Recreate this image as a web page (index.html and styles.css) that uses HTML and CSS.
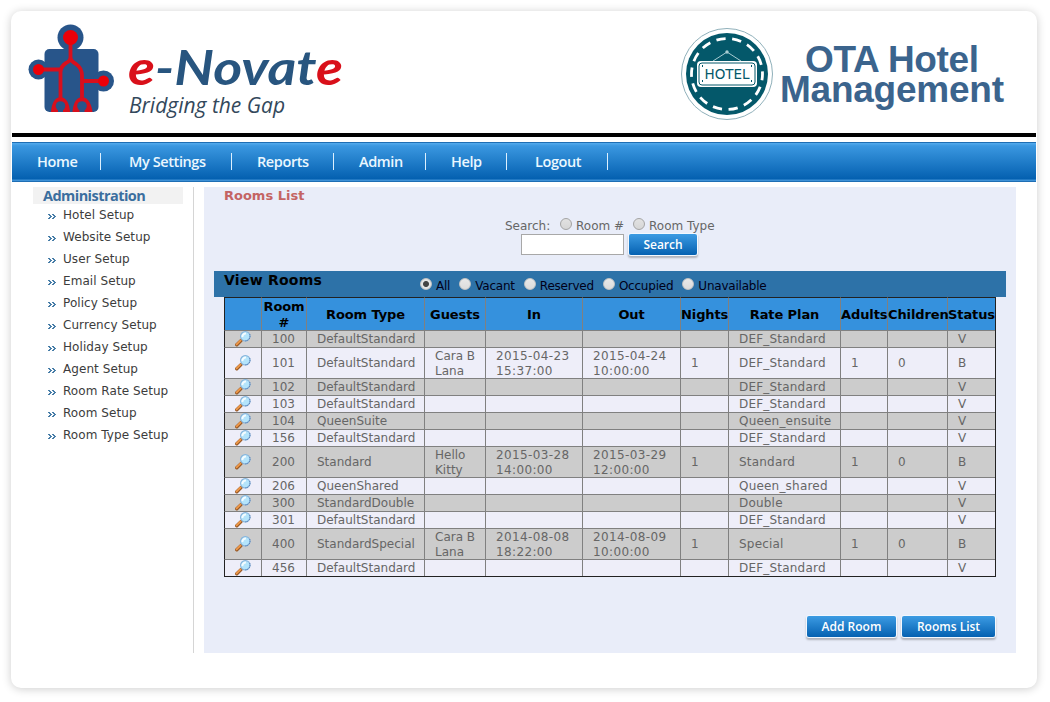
FILE: index.html
```html
<!DOCTYPE html>
<html lang="en">
<head>
<meta charset="utf-8">
<title>Rooms List</title>
<link rel="stylesheet" href="styles.css">
</head>
<body>
<svg class="defs" width="0" height="0" aria-hidden="true">
  <symbol id="lens" viewBox="0 0 16 16">
    <path d="M1.8 13.8 6 9.600" stroke="#9a5a26" stroke-width="3.400" stroke-linecap="round"/>
    <path d="M1.600 13.300 5.600 9.400" stroke="#f09a4a" stroke-width="1.800" stroke-linecap="round"/>
    <circle cx="10.300" cy="5.300" r="4.700" fill="#b4e4fb" stroke="#86b4dc" stroke-width="1.200"/>
    <path d="M7.400 6.200a3.200 3.200 0 0 1 3.600-3.600" stroke="#f4fcff" stroke-width="2" fill="none"/>
    <path d="M14.800 3.300a5 5 0 0 1-5 6.600" stroke="#315c9c" stroke-width=".9" fill="none" stroke-dasharray="1 1"/>
  </symbol>
  <symbol id="chev" viewBox="0 0 8 6">
    <path d="M0 0h1v1h-1zM1 0h1v1h-1zM4 0h2v1h-2zM2 1h1v1h-1zM1 1h1v1h-1zM5 1h2v1h-2zM2 2h2v1h-2zM6 2h2v1h-2zM1 3h2v1h-2zM5 3h2v1h-2zM0 4h2v1h-2zM4 4h2v1h-2z" fill="#2b6a9b" opacity=".88"/>
  </symbol>
</svg>
<div class="page">
  <header class="header">
    <svg class="brand" width="330" height="110" viewBox="20 16 330 110">
      <g fill="#28558a">
        <rect x="44.500" y="49" width="54" height="63" rx="5"/>
        <circle cx="70.500" cy="37.500" r="13"/>
        <circle cx="38.500" cy="69.500" r="10"/>
        <circle cx="103.500" cy="81" r="10.500"/>
      </g>
      <g fill="none" stroke="#d80f1c" stroke-width="3.800">
        <path d="M70.500 37V59M38 69.500H60M60.500 98V72Q61 66 66 63Q70.500 61 70.500 57Q70.500 61 76 64Q82 68 82 76V98M82 81H103"/>
      </g>
      <path d="M51 112Q52 98 60.500 97Q69 98 70 112ZM72.500 112Q73.500 98 82 97Q90.500 98 92.500 112Z" fill="#d80f1c"/>
      <circle cx="60.500" cy="106" r="4.800" fill="#28558a"/>
      <circle cx="82" cy="106" r="4.800" fill="#28558a"/>
      <path d="M58 108h5v4h-5zM79.500 108h5v4h-5z" fill="#28558a"/>
      <circle cx="70.500" cy="37.500" r="7.500" fill="#ec0008"/>
      <circle cx="38.500" cy="69.500" r="5.500" fill="#ec0008"/>
      <circle cx="103.500" cy="81" r="5.500" fill="#ec0008"/>
      <text class="brand-name" x="128" y="85" textLength="215" lengthAdjust="spacingAndGlyphs"><tspan class="red">e</tspan>-Novat<tspan class="red">e</tspan></text>
      <text class="brand-tag" x="129" y="113" textLength="156" lengthAdjust="spacingAndGlyphs">Bridging the Gap</text>
    </svg>
    <svg class="product" width="340" height="110" viewBox="676 18 340 110">
      <circle cx="727" cy="74" r="45.500" fill="#fff" stroke="#8fb0ba"/>
      <circle cx="727" cy="74" r="41" fill="#04586a"/>
      <circle cx="727" cy="74" r="35.500" fill="none" stroke="#fff" stroke-width="2.800" stroke-dasharray="9.300 6.630" stroke-dashoffset="3"/>
      <path d="M713 61 727 52 741 61" stroke="#a9ccd2" fill="none"/>
      <circle cx="727" cy="52" r="1.700" fill="#a9ccd2"/>
      <rect x="697" y="61" width="60" height="26" rx="4" fill="#fff"/>
      <rect x="699" y="63" width="56" height="22" rx="3" fill="#fff" stroke="#04586a"/>
      <path d="M702 66h1M751 66h1M702 81h1M751 81h1" stroke="#04586a" stroke-width="2"/>
      <text class="sign" x="704.500" y="79" textLength="45" lengthAdjust="spacing">HOTEL</text>
      <text class="product-name" x="805" y="72" textLength="174">OTA Hotel</text>
      <text class="product-name" x="780" y="102" textLength="224">Management</text>
    </svg>
  </header>
  <nav>
    <ul class="nav">
      <li>Home</li><li class="wide">My Settings</li><li>Reports</li><li>Admin</li><li>Help</li><li class="wide">Logout</li>
    </ul>
  </nav>
  <div class="body">
    <aside class="side">
      <h2>Administration</h2>
      <ul id="menu"></ul>
    </aside>
    <main class="main">
      <h1>Rooms List</h1>
      <div class="search-opts"><span>Search:</span><input type="radio" name="by"><label>Room #</label><input type="radio" name="by"><label>Room Type</label></div>
      <div class="search-row"><input type="text" class="field"><button class="btn">Search</button></div>
      <div class="bar">
        <h3>View Rooms</h3>
        <div class="filters">
          <input type="radio" name="f" checked><label>All</label>
          <input type="radio" name="f"><label>Vacant</label>
          <input type="radio" name="f"><label>Reserved</label>
          <input type="radio" name="f"><label>Occupied</label>
          <input type="radio" name="f"><label>Unavailable</label>
        </div>
      </div>
      <table class="rooms">
        <colgroup><col class="c1"><col class="c2"><col class="c3"><col class="c4"><col class="c5"><col class="c6"><col class="c7"><col class="c8"><col class="c9"><col class="c10"><col class="c11"></colgroup>
        <thead><tr><th></th><th>Room<br>#</th><th>Room Type</th><th>Guests</th><th>In</th><th>Out</th><th>Nights</th><th>Rate Plan</th><th>Adults</th><th>Children</th><th>Status</th></tr></thead>
        <tbody id="rows"></tbody>
      </table>
      <div class="actions"><button class="btn add">Add Room</button><button class="btn list">Rooms List</button></div>
    </main>
  </div>
</div>
<script src="app.js"></script>
</body>
</html>
```
FILE: styles.css
```css
body { margin: 0; height: 702px; overflow: hidden; background: #fff; font-family: Verdana, "DejaVu Sans", sans-serif; font-size: 12px; color: #666; }
ul, h1, h2, h3 { margin: 0; padding: 0; list-style: none; }
.defs { display: block; }
.page { box-sizing: border-box; width: 1026px; height: 677px; margin: 11px 0 0 11px; padding: 5px 1px 0; border-radius: 10px; background: #fff; box-shadow: 0 1px 10px rgba(0,0,0,.2); }
.header { display: flex; justify-content: space-between; height: 117px; border-bottom: 4px solid #000; }
.brand { margin-left: 8px; }
.product { margin: 2px 20px 0 0; }
.brand-name { font: italic bold 48px Lato, sans-serif; fill: #28557f; }
.brand-name .red { fill: #d9101a; }
.brand-tag { font: italic 22px "Open Sans", sans-serif; fill: #33485b; }
.product-name { font: bold 37px "Liberation Sans", Arial, sans-serif; fill: #3b648d; }
.sign { font: 13.5px "DejaVu Sans", sans-serif; fill: #04586a; }
.nav { display: flex; box-sizing: border-box; height: 40px; margin-top: 5px; padding-top: 10px; border: 1px solid #1e6eb4; border-width: 1px 0; background: linear-gradient(#54abed 0, #3a97e0 3px, #0460b0 36px, #3e91d6 37px, #3e91d6 38px); }
.nav li { box-sizing: border-box; height: 17px; padding: 0 20px 0 25px; border-right: 1px solid #dcf0ff; font: 600 14.5px/17px "Open Sans", sans-serif; letter-spacing: -.4px; color: #eaf7ff; white-space: nowrap; }
.nav li.wide { padding-left: 28px; }
.nav li:nth-child(1) { width: 89px; }
.nav li:nth-child(2) { width: 131px; }
.nav li:nth-child(3) { width: 102px; }
.nav li:nth-child(4) { width: 92px; }
.nav li:nth-child(5) { width: 81px; }
.nav li:nth-child(6) { width: 101px; }
.body { display: flex; height: 466px; margin-top: 5px; }
.side { box-sizing: border-box; width: 182px; margin-right: 10px; padding: 0 10px 0 21px; border-right: 1px solid #d5d5d5; }
.side h2 { height: 17px; padding-left: 10px; background: #f2f2f2; color: #3b6e9e; font: bold 14.5px/18px "Open Sans", sans-serif; letter-spacing: -.55px; }
.side li { display: flex; align-items: center; height: 22px; gap: 7px; padding-left: 15px; color: #3c3c3c; letter-spacing: .07px; white-space: nowrap; }
.side svg { margin-top: 3px; }
.main { width: 812px; background: #e9edf9; }
.main h1 { padding-left: 20px; color: #c46464; font-size: 13px; line-height: 17px; }
input[type=radio] { appearance: none; box-sizing: border-box; flex: none; width: 12px; height: 12px; margin: 0 4px 4px 9px; border: 1px solid #a4a4a4; border-radius: 50%; background: linear-gradient(#e2e2e2, #d6d6d6); }
.filters input[type=radio] { border-color: #c4c4c4; background: linear-gradient(#e8e8e8, #dcdcdc); }
.filters input[type=radio]:checked { background: radial-gradient(circle, #444 2.5px, #e4e4e4 3.5px); }
.search-opts { display: flex; align-items: center; height: 17px; margin: 13px 0 0 301px; }
.search-opts span { width: 46px; }
.search-opts label { white-space: pre; }
.search-row { display: flex; height: 22px; margin: 0 0 15px 317px; }
.field { box-sizing: border-box; width: 103px; height: 21px; border: 1px solid #a8a8a8; padding: 0; margin: 0 5px 0 0; background: #fff; }
.btn { box-sizing: border-box; width: 68px; height: 21px; padding: 1px 0 0; border: 0; border-radius: 2px; background: linear-gradient(#3c9be3, #0561b1); box-shadow: 0 0 0 1px #f2f8ff, 0 2px 2px 1px rgba(0,0,0,.25); color: #fff; font: 600 12px/20px "Open Sans", sans-serif; }
.bar { display: flex; width: 782px; height: 26px; margin-left: 10px; padding-left: 10px; background: #2d72a8; color: #000018; }
.bar h3 { width: 187px; color: #000; font-size: 14px; line-height: 18px; letter-spacing: .25px; }
.filters { display: flex; align-items: center; padding-top: 3px; letter-spacing: -.22px; }
.rooms { table-layout: fixed; width: 772px; margin-left: 20px; border: solid #222; border-width: 0 1px 1px 0; border-spacing: 0; }
.c1 { width: 37px; } .c2 { width: 45px; } .c3 { width: 118px; } .c4 { width: 61px; } .c5 { width: 97px; } .c6 { width: 98px; } .c7 { width: 48px; } .c8 { width: 112px; } .c9 { width: 47px; } .c10 { width: 60px; } .c11 { width: 48px; }
.rooms th, .rooms td { box-sizing: border-box; border: solid #808080; border-width: 1px 0 0 1px; padding: 0; }
.rooms th { height: 33px; padding-top: 1px; border-top-color: #222; background: #3591dd; color: #000; font-size: 13px; line-height: 15.5px; letter-spacing: -.1px; white-space: nowrap; }
.rooms td { height: 17px; padding-left: 10px; line-height: 15px; white-space: nowrap; }
.rooms td:nth-child(5), .rooms td:nth-child(6) { letter-spacing: .37px; }
.rooms td:nth-child(8) { letter-spacing: .2px; }
.rooms tr > :first-child { border-left-color: #222; }
.rooms td svg { display: block; }
.rooms .tall td { height: 31px; }
.rooms .tall td:nth-child(4), .rooms .tall td:nth-child(5), .rooms .tall td:nth-child(6) { padding-top: 1px; line-height: 14.5px; }
.rooms tbody tr { background: #eeeef9; }
.rooms tbody tr:nth-child(odd) { background: #ccc; }
.actions { display: flex; justify-content: flex-end; gap: 6px; margin: 39px 21px 0 0; }
.add { width: 89px; }
.list { width: 93px; }
```
FILE: app.js
```js
const menu = ['Hotel', 'Website', 'User', 'Email', 'Policy', 'Currency', 'Holiday', 'Agent', 'Room Rate', 'Room', 'Room Type'];
document.getElementById('menu').innerHTML = menu
  .map(m => `<li><svg width="8" height="6"><use href="#chev"/></svg><span>${m} Setup</span></li>`).join('');

const rooms = [
  ['100', 'DefaultStandard', '', '', '', '', 'DEF_Standard', '', '', 'V'],
  ['101', 'DefaultStandard', 'Cara B<br>Lana', '2015-04-23<br>15:37:00', '2015-04-24<br>10:00:00', '1', 'DEF_Standard', '1', '0', 'B'],
  ['102', 'DefaultStandard', '', '', '', '', 'DEF_Standard', '', '', 'V'],
  ['103', 'DefaultStandard', '', '', '', '', 'DEF_Standard', '', '', 'V'],
  ['104', 'QueenSuite', '', '', '', '', 'Queen_ensuite', '', '', 'V'],
  ['156', 'DefaultStandard', '', '', '', '', 'DEF_Standard', '', '', 'V'],
  ['200', 'Standard', 'Hello<br>Kitty', '2015-03-28<br>14:00:00', '2015-03-29<br>12:00:00', '1', 'Standard', '1', '0', 'B'],
  ['206', 'QueenShared', '', '', '', '', 'Queen_shared', '', '', 'V'],
  ['300', 'StandardDouble', '', '', '', '', 'Double', '', '', 'V'],
  ['301', 'DefaultStandard', '', '', '', '', 'DEF_Standard', '', '', 'V'],
  ['400', 'StandardSpecial', 'Cara B<br>Lana', '2014-08-08<br>18:22:00', '2014-08-09<br>10:00:00', '1', 'Special', '1', '0', 'B'],
  ['456', 'DefaultStandard', '', '', '', '', 'DEF_Standard', '', '', 'V'],
];
document.getElementById('rows').innerHTML = rooms.map(r =>
  `<tr class="${r[2] ? 'tall' : ''}"><td><svg width="16" height="16"><use href="#lens"/></svg></td>${r.map(c => `<td>${c}</td>`).join('')}</tr>`).join('');
```
